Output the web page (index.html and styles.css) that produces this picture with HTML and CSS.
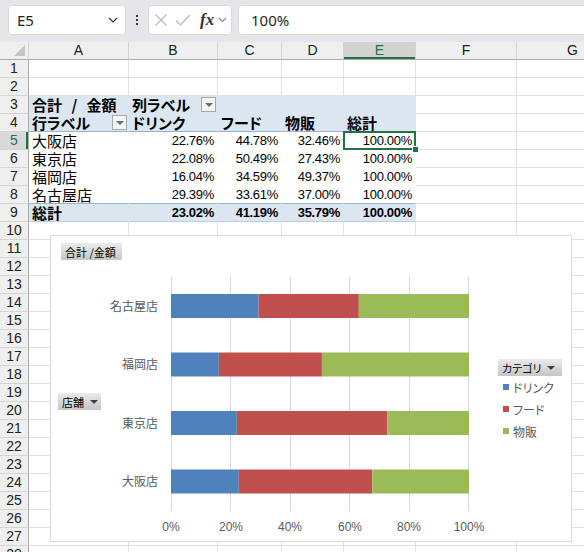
FILE: index.html
```html
<!DOCTYPE html>
<html lang="ja">
<head>
    <meta charset="UTF-8">
    <meta name="viewport" content="width=device-width, initial-scale=1.0">
    <title>ピボットテーブル</title>
    <link rel="stylesheet" href="styles.css">
</head>
<body>
    <div class="toolbar">
        <div class="namebox">
            <span>E5</span>
            <svg width="10" height="6" viewBox="0 0 10 6"><path d="M1 1l4 4 4-4" fill="none" stroke="#333" stroke-width="1.2"/></svg>
        </div>
        <div class="dots"><i></i><i></i><i></i></div>
        <div class="fxbox">
            <svg width="14" height="14" viewBox="0 0 14 14"><path d="M1.5 1.5l11 11M12.5 1.5l-11 11" stroke="#b8b8b8" stroke-width="1.2"/></svg>
            <svg width="16" height="14" viewBox="0 0 16 14"><path d="M1 7.5l4.5 4.5L15 2" fill="none" stroke="#b8b8b8" stroke-width="1.2"/></svg>
            <span class="fx">fx</span>
            <svg width="9" height="6" viewBox="0 0 9 6"><path d="M1 1l3.5 3.5L8 1" fill="none" stroke="#8a8a8a" stroke-width="1.1"/></svg>
        </div>
        <div class="formula">100%</div>
    </div>

    <div class="sheet">
        <table class="grid">
            <colgroup>
                <col style="width:29px"><col style="width:100px"><col style="width:89px"><col style="width:64px">
                <col style="width:62px"><col style="width:72px"><col style="width:101px"><col style="width:112px">
            </colgroup>
            <thead>
                <tr><th class="corner"></th><th>A</th><th>B</th><th>C</th><th>D</th><th class="on">E</th><th>F</th><th>G</th></tr>
            </thead>
            <tbody>
                <tr><th>1</th><td></td><td></td><td></td><td></td><td></td><td></td><td></td></tr>
                <tr><th>2</th><td></td><td></td><td></td><td></td><td></td><td></td><td></td></tr>
                <tr class="pt-head"><th>3</th><td class="b title">合計 / 金額</td><td class="b">列ラベル<span class="dd"></span></td><td></td><td></td><td></td><td class="out"></td><td class="out"></td></tr>
                <tr class="pt-head pt-line"><th>4</th><td class="b">行ラベル<span class="dd"></span></td><td class="b">ドリンク</td><td class="b">フード</td><td class="b">物販</td><td class="b">総計</td><td class="out"></td><td class="out"></td></tr>
                <tr class="pt-row"><th class="on">5</th><td>大阪店</td><td class="n">22.76%</td><td class="n">44.78%</td><td class="n">32.46%</td><td class="n cur">100.00%<div class="sel"></div></td><td class="out"></td><td class="out"></td></tr>
                <tr class="pt-row"><th>6</th><td>東京店</td><td class="n">22.08%</td><td class="n">50.49%</td><td class="n">27.43%</td><td class="n">100.00%</td><td class="out"></td><td class="out"></td></tr>
                <tr class="pt-row"><th>7</th><td>福岡店</td><td class="n">16.04%</td><td class="n">34.59%</td><td class="n">49.37%</td><td class="n">100.00%</td><td class="out"></td><td class="out"></td></tr>
                <tr class="pt-row pt-line"><th>8</th><td>名古屋店</td><td class="n">29.39%</td><td class="n">33.61%</td><td class="n">37.00%</td><td class="n">100.00%</td><td class="out"></td><td class="out"></td></tr>
                <tr class="pt-total"><th>9</th><td class="b">総計</td><td class="n b">23.02%</td><td class="n b">41.19%</td><td class="n b">35.79%</td><td class="n b">100.00%</td><td class="out"></td><td class="out"></td></tr>
                <tr><th>10</th><td></td><td></td><td></td><td></td><td></td><td></td><td></td></tr>
                <tr><th>11</th><td></td><td></td><td></td><td></td><td></td><td></td><td></td></tr>
                <tr><th>12</th><td></td><td></td><td></td><td></td><td></td><td></td><td></td></tr>
                <tr><th>13</th><td></td><td></td><td></td><td></td><td></td><td></td><td></td></tr>
                <tr><th>14</th><td></td><td></td><td></td><td></td><td></td><td></td><td></td></tr>
                <tr><th>15</th><td></td><td></td><td></td><td></td><td></td><td></td><td></td></tr>
                <tr><th>16</th><td></td><td></td><td></td><td></td><td></td><td></td><td></td></tr>
                <tr><th>17</th><td></td><td></td><td></td><td></td><td></td><td></td><td></td></tr>
                <tr><th>18</th><td></td><td></td><td></td><td></td><td></td><td></td><td></td></tr>
                <tr><th>19</th><td></td><td></td><td></td><td></td><td></td><td></td><td></td></tr>
                <tr><th>20</th><td></td><td></td><td></td><td></td><td></td><td></td><td></td></tr>
                <tr><th>21</th><td></td><td></td><td></td><td></td><td></td><td></td><td></td></tr>
                <tr><th>22</th><td></td><td></td><td></td><td></td><td></td><td></td><td></td></tr>
                <tr><th>23</th><td></td><td></td><td></td><td></td><td></td><td></td><td></td></tr>
                <tr><th>24</th><td></td><td></td><td></td><td></td><td></td><td></td><td></td></tr>
                <tr><th>25</th><td></td><td></td><td></td><td></td><td></td><td></td><td></td></tr>
                <tr><th>26</th><td></td><td></td><td></td><td></td><td></td><td></td><td></td></tr>
                <tr><th>27</th><td></td><td></td><td></td><td></td><td></td><td></td><td></td></tr>
                <tr><th>28</th><td></td><td></td><td></td><td></td><td></td><td></td><td></td></tr>
            </tbody>
        </table>

        <!-- pivot chart floats over the cells -->
        <div class="chart">
            <svg class="plot" width="522" height="307" viewBox="0 0 522 307">
                <g stroke="#d9d9d9" stroke-width="1">
                    <line x1="121.5" y1="42" x2="121.5" y2="276"/>
                    <line x1="180.5" y1="42" x2="180.5" y2="276"/>
                    <line x1="240.5" y1="42" x2="240.5" y2="276"/>
                    <line x1="299.5" y1="42" x2="299.5" y2="276"/>
                    <line x1="359.5" y1="42" x2="359.5" y2="276"/>
                    <line x1="418.5" y1="42" x2="418.5" y2="276"/>
                </g>
                <!-- 名古屋店 -->
                <rect x="121" y="59" width="87.6" height="24" fill="#4f81bd"/>
                <rect x="208.6" y="59" width="100.2" height="24" fill="#c0504d"/>
                <rect x="308.8" y="59" width="110.2" height="24" fill="#9bbb59"/>
                <!-- 福岡店 -->
                <rect x="121" y="117.5" width="47.8" height="24" fill="#4f81bd"/>
                <rect x="168.8" y="117.5" width="103.1" height="24" fill="#c0504d"/>
                <rect x="271.9" y="117.5" width="147.1" height="24" fill="#9bbb59"/>
                <!-- 東京店 -->
                <rect x="121" y="176" width="65.8" height="24" fill="#4f81bd"/>
                <rect x="186.8" y="176" width="150.5" height="24" fill="#c0504d"/>
                <rect x="337.3" y="176" width="81.7" height="24" fill="#9bbb59"/>
                <!-- 大阪店 -->
                <rect x="121" y="234.5" width="67.8" height="24" fill="#4f81bd"/>
                <rect x="188.8" y="234.5" width="133.4" height="24" fill="#c0504d"/>
                <rect x="322.2" y="234.5" width="96.8" height="24" fill="#9bbb59"/>

                <g class="cat" text-anchor="end">
                    <text x="108" y="75.5">名古屋店</text>
                    <text x="108" y="134">福岡店</text>
                    <text x="108" y="192.5">東京店</text>
                    <text x="108" y="251">大阪店</text>
                </g>
                <g class="axis" text-anchor="middle">
                    <text x="121" y="296">0%</text>
                    <text x="181" y="296">20%</text>
                    <text x="240" y="296">40%</text>
                    <text x="300" y="296">60%</text>
                    <text x="359" y="296">80%</text>
                    <text x="419" y="296">100%</text>
                </g>
            </svg>

            <div class="fbtn value-btn">合計 /金額</div>
            <div class="fbtn axis-btn">店舗<span class="tri"></span></div>

            <div class="legend">
                <div class="fbtn">カテゴリ<span class="tri"></span></div>
                <div class="key"><i class="blue"></i>ドリンク</div>
                <div class="key"><i class="red"></i>フード</div>
                <div class="key"><i class="green"></i>物販</div>
            </div>
        </div>
    </div>
</body>
</html>
```

FILE: styles.css
```css
body {
    margin: 0;
    width: 584px;
    height: 552px;
    overflow: hidden;
    background-color: #fff;
    font-family: "Noto Sans CJK JP", sans-serif;
    font-feature-settings: "palt";
}

/* formula bar */
.toolbar {
    display: flex;
    align-items: flex-start;
    box-sizing: border-box;
    height: 42px;
    padding: 5px 0 0 8px;
    background-color: #e6e6ea;
    font-family: "Noto Sans", "Noto Sans CJK JP", sans-serif;
}
.namebox {
    display: flex;
    align-items: center;
    justify-content: space-between;
    box-sizing: border-box;
    width: 118px;
    height: 30px;
    padding: 0 7px 0 8px;
    background-color: #fff;
    border: 1px solid #dcdce0;
    border-radius: 4px;
    font-size: 15px;
    color: #1f1f1f;
}
.dots {
    display: flex;
    flex-direction: column;
    align-items: center;
    justify-content: center;
    gap: 2px;
    width: 22px;
    height: 30px;
}
.dots i {
    width: 2px;
    height: 2px;
    background-color: #333;
}
.fxbox {
    display: flex;
    align-items: center;
    gap: 7px;
    box-sizing: border-box;
    width: 84px;
    height: 30px;
    padding-left: 5px;
    background-color: #fff;
    border: 1px solid #dcdce0;
    border-radius: 4px;
}
.fx {
    font-family: "Liberation Serif", serif;
    font-style: italic;
    font-weight: bold;
    font-size: 17px;
    color: #333;
    margin-left: 2px;
    margin-right: -3px;
}
.formula {
    flex: 1;
    box-sizing: border-box;
    height: 30px;
    margin-left: 6px;
    margin-right: -8px;
    padding-left: 12px;
    line-height: 28px;
    background-color: #fff;
    border: 1px solid #dcdce0;
    border-radius: 4px;
    font-size: 15px;
    color: #1f1f1f;
}

/* sheet grid */
.sheet {
    position: relative;
}
.grid {
    border-collapse: separate;
    border-spacing: 0;
    table-layout: fixed;
    width: 629px;
    font-size: 15px;
    color: #000;
}
.grid th,
.grid td {
    box-sizing: border-box;
    height: 18px;
    padding: 0 3px;
    border-right: 1px solid #e1e1e1;
    border-bottom: 1px solid #e1e1e1;
    line-height: 17px;
    white-space: nowrap;
}
.grid th {
    padding: 0;
    background-color: #efefef;
    font-family: "Liberation Sans", sans-serif;
    font-weight: normal;
    font-size: 14px;
    color: #222;
    text-align: center;
}
.grid thead th {
    border-right-color: #d4d4d4;
    border-bottom-color: #ababab;
}
.grid tbody th {
    border-right-color: #ababab;
    border-bottom-color: #d4d4d4;
}
.grid thead th.on {
    background-color: #d2d2d2;
    color: #217346;
    box-shadow: inset 0 -2px 0 #217346;
}
.grid tbody th.on {
    background-color: #d9d9d9;
    color: #217346;
    box-shadow: inset -2px 0 0 #217346;
}
.corner {
    position: relative;
}
.corner::after {
    content: "";
    position: absolute;
    right: 3px;
    bottom: 3px;
    border-left: 11px solid transparent;
    border-bottom: 11px solid #c4c4c4;
}

/* pivot table */
.pt-head td,
.pt-total td {
    background-color: #dce6f1;
    border-color: #dce6f1;
}
.pt-row td {
    border-color: #fff;
}
.pt-head td.out,
.pt-row td.out,
.pt-total td.out {
    background-color: #fff;
    border-color: #e1e1e1;
}
.pt-line td {
    border-bottom-color: #95b3d7;
}
.pt-total td {
    border-bottom-color: #b8cce4;
}
.b {
    font-weight: bold;
}
.title {
    word-spacing: 6px;
}
.n {
    text-align: right;
    font-family: "Liberation Sans", sans-serif;
    font-size: 13px;
    letter-spacing: -0.3px;
}
.dd {
    float: right;
    position: relative;
    box-sizing: border-box;
    width: 15px;
    height: 15px;
    margin: 1px -2px 0 0;
    background-color: #f4f4f4;
    border: 1px solid #a9a9a9;
}
.dd::after {
    content: "";
    position: absolute;
    left: 3px;
    top: 5px;
    border-left: 4px solid transparent;
    border-right: 4px solid transparent;
    border-top: 4px solid #6d6d6d;
}
.cur {
    position: relative;
}
.sel {
    position: absolute;
    left: -1px;
    top: -1px;
    right: -1px;
    bottom: -1px;
    border: 2px solid #217346;
}
.sel::after {
    content: "";
    position: absolute;
    right: -5px;
    bottom: -5px;
    width: 5px;
    height: 5px;
    background-color: #217346;
    border: 1px solid #fff;
}

/* pivot chart */
.chart {
    position: absolute;
    left: 50px;
    top: 193px;
    box-sizing: border-box;
    width: 522px;
    height: 307px;
    background-color: #fff;
    border: 1px solid #d9d9d9;
}
.plot {
    position: absolute;
    left: -1px;
    top: -1px;
}
.cat {
    font-family: "Noto Sans CJK JP", sans-serif;
    font-size: 12px;
    fill: #595959;
}
.axis {
    font-family: "Liberation Sans", sans-serif;
    font-size: 12px;
    fill: #595959;
}
.fbtn {
    display: flex;
    align-items: center;
    gap: 6px;
    box-sizing: border-box;
    height: 17px;
    padding: 0 4px;
    background: linear-gradient(#ebebeb, #c6c6c6);
    font-size: 11px;
    color: #000;
    white-space: nowrap;
}
.value-btn {
    position: absolute;
    left: 10px;
    top: 7px;
    width: 61px;
}
.axis-btn {
    position: absolute;
    left: 7px;
    top: 157px;
    width: 43px;
}
.tri {
    border-left: 4px solid transparent;
    border-right: 4px solid transparent;
    border-top: 4px solid #404040;
}
.legend {
    position: absolute;
    left: 447px;
    top: 123px;
    display: flex;
    flex-direction: column;
    width: 64px;
}
.key {
    display: flex;
    align-items: center;
    gap: 4px;
    height: 22px;
    padding-left: 5px;
    font-size: 12px;
    color: #595959;
}
.key i {
    width: 6px;
    height: 6px;
}
.key .blue {
    background-color: #4f81bd;
}
.key .red {
    background-color: #c0504d;
}
.key .green {
    background-color: #9bbb59;
}
```
